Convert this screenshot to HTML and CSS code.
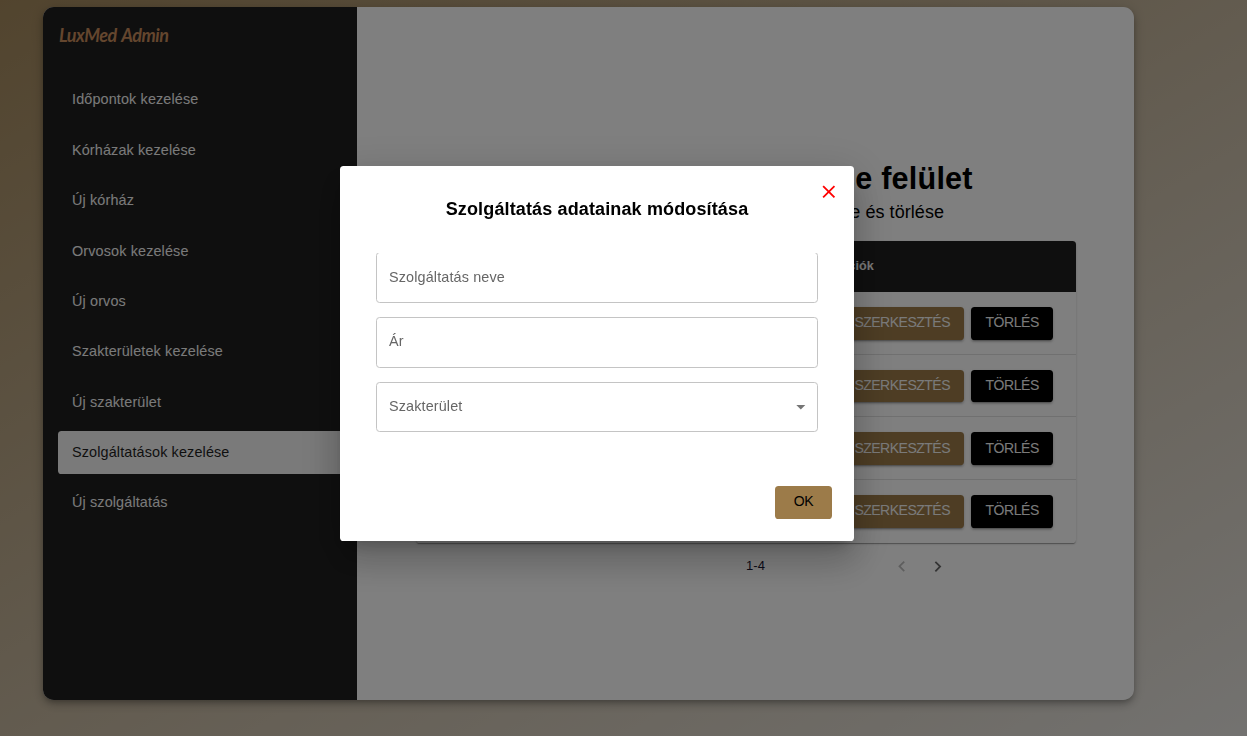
FILE: index.html
```html
<!DOCTYPE html>
<html lang="hu">
<head>
<meta charset="utf-8">
<title>LuxMed Admin</title>
<link rel="stylesheet" href="styles.css">
</head>
<body>
<div class="app">
  <aside class="sidebar">
    <div class="logo">LuxMed Admin</div>
    <nav class="nav">
      <a class="nav-item">Időpontok kezelése</a>
      <a class="nav-item">Kórházak kezelése</a>
      <a class="nav-item">Új kórház</a>
      <a class="nav-item">Orvosok kezelése</a>
      <a class="nav-item">Új orvos</a>
      <a class="nav-item">Szakterületek kezelése</a>
      <a class="nav-item">Új szakterület</a>
      <a class="nav-item selected">Szolgáltatások kezelése</a>
      <a class="nav-item">Új szolgáltatás</a>
    </nav>
  </aside>
  <main class="main">
    <h1 class="title">Szolgáltatások kezelése felület</h1>
    <p class="subtitle">Szolgáltatások adatainak szerkesztése és törlése</p>
    <div class="table">
      <div class="table-head"><span>Funkciók</span></div>
      <div class="row"><button class="btn edit">SZERKESZTÉS</button><button class="btn delete">TÖRLÉS</button></div>
      <div class="row"><button class="btn edit">SZERKESZTÉS</button><button class="btn delete">TÖRLÉS</button></div>
      <div class="row"><button class="btn edit">SZERKESZTÉS</button><button class="btn delete">TÖRLÉS</button></div>
      <div class="row"><button class="btn edit">SZERKESZTÉS</button><button class="btn delete">TÖRLÉS</button></div>
    </div>
    <div class="pagination">
      <span class="range">1-4</span>
      <svg class="chevron disabled" viewBox="0 0 24 24"><path d="M15.41 16.09l-4.58-4.59 4.58-4.59L14 5.5l-6 6 6 6z"/></svg>
      <svg class="chevron" viewBox="0 0 24 24"><path d="M8.59 16.34l4.58-4.59-4.58-4.59L10 5.75l6 6-6 6z"/></svg>
    </div>
  </main>
</div>
<div class="backdrop">
  <div class="dialog">
    <svg class="close" viewBox="0 0 24 24"><path d="M19 6.41L17.59 5 12 10.59 6.41 5 5 6.41 10.59 12 5 17.59 6.41 19 12 13.41 17.59 19 19 17.59 13.41 12z"/></svg>
    <h2 class="dialog-title">Szolgáltatás adatainak módosítása</h2>
    <div class="fields">
      <div class="field clipped">Szolgáltatás neve</div>
      <div class="field">Ár</div>
      <div class="field select">Szakterület
        <svg class="arrow" viewBox="0 0 24 24"><path d="M7 10l5 5 5-5z"/></svg>
      </div>
    </div>
    <div class="actions"><button class="ok">OK</button></div>
  </div>
</div>
</body>
</html>
```

FILE: styles.css
```css
* { box-sizing: border-box; }
body {
  margin: 0;
  height: 736px;
  overflow: hidden;
  padding: 7px 0 0 43px;
  font-family: "Liberation Sans", Arial, sans-serif;
  font-size: 14.4px;
  letter-spacing: 0.135px;
  background: linear-gradient(to bottom right, #a4895d, #e7e5e1);
}
.app {
  display: flex;
  width: 1091px;
  height: 693px;
  border-radius: 10.8px;
  overflow: hidden;
  background: #fff;
  box-shadow: 0 3px 5px -1px rgba(0,0,0,.2), 0 5px 9px rgba(0,0,0,.14), 0 1px 13px rgba(0,0,0,.12);
}
.sidebar {
  width: 314px;
  flex: none;
  padding: 15px 14.4px 0 15px;
  background: #1f1f1f;
}
.logo {
  height: 26px;
  margin-left: 1px;
  font: italic 700 18px/26px Lato, sans-serif;
  letter-spacing: -0.5px;
  word-spacing: 1.5px;
  white-space: nowrap;
  color: #c88c5c;
}
.nav {
  display: flex;
  flex-direction: column;
  gap: 7.2px;
  margin-top: 30.4px;
}
.nav-item {
  height: 43.2px;
  padding-left: 14px;
  line-height: 43.2px;
  border-radius: 3.6px;
  color: #f5f5f5;
}
.nav-item.selected {
  background: #f5f5f5;
  color: #1f1f1f;
}
.main {
  flex: 1;
  padding: 152px 58px 0 59px;
}
.title {
  margin: 0;
  line-height: 38px;
  font-size: 30.6px;
  letter-spacing: 0.2px;
  text-align: center;
  white-space: nowrap;
}
.subtitle {
  margin: 0 0 13px;
  line-height: 31px;
  font-size: 18px;
  letter-spacing: 0.06px;
  text-align: center;
  white-space: nowrap;
}
.table {
  border-radius: 3.6px;
  overflow: hidden;
  box-shadow: 0 2px 1px -1px rgba(0,0,0,.2), 0 1px 1px rgba(0,0,0,.14), 0 1px 3px rgba(0,0,0,.12);
}
.table-head {
  height: 51px;
  padding-right: 202px;
  line-height: 50px;
  text-align: right;
  font-size: 12.6px;
  font-weight: 700;
  background: #1f1f1f;
  color: #f5f5f5;
}
.row {
  display: flex;
  justify-content: flex-end;
  align-items: center;
  gap: 7px;
  height: 62.7px;
  padding: 1px 23px 0 0;
  border-bottom: 1px solid #e0e0e0;
}
.row:last-child { border-bottom: 0; padding-top: 0; }
.btn, .ok {
  height: 32.8px;
  padding: 0 14.4px 2px;
  border: 0;
  border-radius: 3.6px;
  font: 14px "Liberation Sans", Arial, sans-serif;
  letter-spacing: -0.42px;
}
.btn {
  color: #f5f5f5;
  box-shadow: 0 3px 1px -2px rgba(0,0,0,.2), 0 2px 2px rgba(0,0,0,.14), 0 1px 4px rgba(0,0,0,.12);
}
.edit { width: 124px; background: #9c7b49; letter-spacing: -0.5px; }
.delete { width: 82px; background: #000; }
.pagination {
  display: flex;
  align-items: center;
  height: 46px;
  padding-left: 330px;
  font-size: 13px;
}
.range { width: 145.2px; color: #171733; }
.chevron { width: 21.6px; height: 21.6px; margin: 2px 14.4px 0 0; fill: #686868; }
.chevron.disabled { fill: #bdbdbd; }
.backdrop {
  position: fixed;
  inset: 0;
  padding: 166px 0 0 340px;
  background: rgba(0,0,0,.5);
}
.dialog {
  position: relative;
  width: 514px;
  height: 375px;
  padding: 28px 36px 0;
  border-radius: 3.6px;
  background: #fff;
  box-shadow: 0 10px 13.5px -6px rgba(0,0,0,.2), 0 21.6px 34px 2.7px rgba(0,0,0,.14), 0 8px 41px 7px rgba(0,0,0,.12);
}
.close {
  position: absolute;
  top: 15px;
  right: 14.4px;
  width: 21.6px;
  height: 21.6px;
  fill: red;
}
.dialog-title {
  margin: 0;
  line-height: 30px;
  font-size: 18px;
  text-align: center;
}
.fields {
  display: flex;
  flex-direction: column;
  gap: 14px;
  margin-top: 28px;
}
.field {
  display: flex;
  align-items: center;
  justify-content: space-between;
  height: 51px;
  padding: 0 5px 3px 12px;
  border: 1px solid #c4c4c4;
  border-radius: 3.6px;
  color: #666;
}
.field.clipped { padding-bottom: 1px; clip-path: inset(1px 0 0 0); }
.field.select { height: 50px; padding-bottom: 2px; }
.arrow { width: 21.6px; height: 21.6px; margin-top: 1px; fill: #757575; }
.actions {
  display: flex;
  justify-content: flex-end;
  margin: 54px -14px 0 0;
}
.ok { width: 57px; background: #9c7b49; color: #000; }
```
